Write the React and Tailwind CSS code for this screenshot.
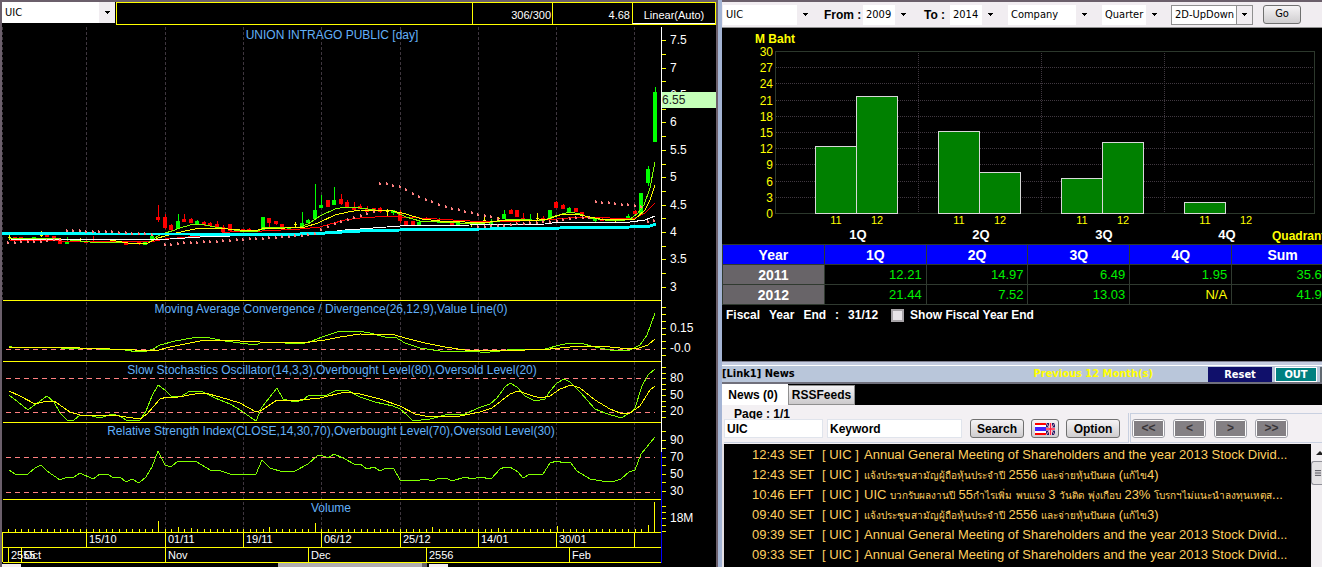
import { useState } from "react";
import { Menu } from "lucide-react";

const GRID_X = [86, 165, 243, 321, 400, 478, 556, 634];
const barX = (i) => 8 + Math.round(i * 6.53);

// x, high, open/close top, open/close bottom, low, type
const CANDLES = [
  [9, 235, 237, 238, 240, "y"],
  [15, 237, 237, 239, 239, "r"],
  [21, 237, 237, 239, 239, "r"],
  [34, 237, 237, 240, 240, "g"],
  [41, 231, 235, 236, 237, "y"],
  [47, 235, 235, 237, 237, "r"],
  [54, 236, 236, 239, 239, "r"],
  [60, 239, 239, 244, 244, "r"],
  [67, 237, 242, 244, 244, "g"],
  [80, 238, 239, 240, 241, "y"],
  [86, 240, 241, 243, 243, "r"],
  [93, 236, 241, 243, 243, "r"],
  [113, 240, 241, 243, 243, "r"],
  [126, 241, 242, 245, 245, "r"],
  [139, 241, 242, 244, 245, "r"],
  [145, 241, 242, 245, 245, "g"],
  [152, 236, 236, 240, 240, "g"],
  [158, 205, 217, 220, 222, "r"],
  [165, 214, 217, 228, 229, "r"],
  [171, 224, 225, 230, 231, "r"],
  [178, 214, 221, 229, 229, "g"],
  [184, 214, 219, 222, 222, "r"],
  [191, 218, 219, 223, 223, "r"],
  [197, 220, 221, 225, 225, "g"],
  [204, 221, 222, 225, 226, "r"],
  [210, 222, 223, 226, 227, "r"],
  [217, 221, 224, 228, 228, "r"],
  [223, 225, 227, 232, 232, "r"],
  [230, 224, 224, 231, 232, "r"],
  [237, 230, 230, 232, 232, "g"],
  [243, 229, 229, 231, 231, "r"],
  [249, 228, 229, 231, 231, "r"],
  [256, 230, 230, 232, 232, "g"],
  [263, 217, 217, 230, 231, "g"],
  [269, 218, 218, 223, 227, "r"],
  [276, 221, 221, 224, 225, "r"],
  [282, 224, 224, 228, 229, "r"],
  [289, 227, 228, 230, 230, "g"],
  [295, 222, 224, 225, 228, "y"],
  [302, 212, 223, 227, 227, "g"],
  [308, 219, 220, 223, 224, "g"],
  [315, 184, 210, 219, 220, "g"],
  [321, 195, 205, 208, 208, "g"],
  [328, 200, 200, 207, 207, "r"],
  [334, 187, 200, 205, 205, "g"],
  [341, 194, 199, 204, 205, "r"],
  [347, 200, 202, 208, 208, "r"],
  [354, 202, 207, 210, 210, "r"],
  [360, 204, 206, 209, 209, "r"],
  [367, 206, 209, 212, 212, "r"],
  [374, 208, 208, 211, 211, "r"],
  [380, 207, 208, 212, 213, "r"],
  [387, 209, 211, 212, 216, "y"],
  [393, 210, 210, 213, 215, "g"],
  [400, 210, 213, 221, 223, "r"],
  [406, 221, 221, 225, 225, "r"],
  [413, 221, 221, 225, 225, "r"],
  [419, 221, 222, 225, 225, "g"],
  [426, 217, 218, 220, 220, "r"],
  [439, 218, 221, 223, 223, "g"],
  [452, 221, 222, 225, 225, "r"],
  [458, 221, 222, 225, 225, "g"],
  [471, 222, 223, 224, 227, "y"],
  [476, 221, 221, 225, 225, "g"],
  [484, 215, 220, 221, 222, "y"],
  [491, 219, 222, 225, 226, "g"],
  [498, 217, 218, 219, 221, "y"],
  [504, 210, 214, 219, 219, "g"],
  [511, 209, 210, 214, 214, "r"],
  [517, 210, 210, 217, 217, "r"],
  [523, 213, 218, 220, 220, "r"],
  [530, 214, 219, 221, 221, "g"],
  [537, 213, 218, 219, 220, "y"],
  [543, 216, 218, 221, 221, "r"],
  [550, 210, 210, 219, 219, "g"],
  [556, 201, 202, 208, 208, "r"],
  [563, 204, 205, 209, 209, "r"],
  [569, 207, 208, 212, 212, "g"],
  [576, 208, 208, 212, 212, "r"],
  [582, 212, 212, 215, 215, "r"],
  [595, 217, 219, 221, 222, "g"],
  [602, 218, 219, 221, 221, "r"],
  [615, 219, 220, 221, 222, "y"],
  [628, 214, 216, 218, 219, "g"],
  [635, 210, 211, 214, 214, "r"],
  [641, 193, 193, 214, 214, "g"],
  [648, 166, 169, 183, 186, "g"],
  [655, 87, 92, 142, 142, "g"],
];

const CANDLE_FILL = { r: "#ff0000", g: "#00ff00", y: "#ffff00" };

// first bar index, then one y per bar
const SAR_RUNS = [
  [0, [242, 242, 241, 241, 241, 241, 240, 239, 239]],
  [9, [230, 230, 230, 231, 231, 231, 231, 231, 232, 232, 233, 233, 233, 234]],
  [24, [244, 244, 243, 242, 242, 242, 241, 241, 241, 240, 240, 239, 239, 238, 238, 238, 237, 237, 236, 236, 235, 235, 234, 233, 229, 226, 223, 221, 219, 217, 215, 213, 211]],
  [57, [183, 183, 185, 186, 189, 193, 196, 199, 201, 204, 206, 208, 209, 211, 212, 214, 215, 216, 218]],
  [72, [226, 226, 225, 225, 225, 224, 223, 223, 222, 222, 221, 221, 220, 219, 218, 217, 217, 217]],
  [90, [201, 202, 202, 203, 204, 204, 205, 206]],
  [98, [221, 220]],
];

const PRICE_LINES = [
  { color: "#ff0000", points: "9,240 60,241 150,242 165,239 200,236 230,232 262,231 300,229 320,227 330,224 345,220 360,218 375,217 390,216 400,217 420,218 470,221 520,221 545,220 580,217 610,218 635,218 645,213 655,203" },
  { color: "#80ff00", points: "9,239 40,238 60,239 90,242 120,242 135,244 148,243 158,236 165,233 172,231 180,228 190,225 198,224 205,225 215,227 228,229 240,231 258,231 264,227 280,227 300,227 308,224 320,216 335,209 345,207 360,208 375,210 393,211 406,217 420,221 440,222 460,223 485,223 500,221 510,219 530,220 545,220 555,216 570,212 580,214 590,218 605,220 620,221 630,219 637,214 644,205 650,188 655,162" },
  { color: "#ffff00", points: "9,236 12,239 40,240 60,239 110,240 128,243 148,243 158,238 172,234 185,231 200,228 215,228 228,229 240,230 258,230 266,228 285,228 305,227 318,223 335,215 348,212 360,210 393,211 406,214 422,219 440,221 465,222 490,222 505,220 530,221 548,219 560,215 575,214 585,216 600,219 620,220 635,219 645,210 650,200 655,185" },
  { color: "#ffffff", points: "9,239 130,240 170,239 200,237 230,236 270,235 320,233 345,230 360,229 400,226 470,225 545,224 560,222 630,222 645,220 655,216" },
];

const MACD_FAST = "9,346 15,348 40,347 50,347 60,348 100,349 125,350 138,352 147,351 153,349 160,345 175,341 192,338 205,337 225,341 240,343 256,345 262,342 285,343 305,343 312,341 322,337 340,331 358,331 370,333 385,337 395,337 405,343 420,348 440,351 460,351 480,352 490,352 500,351 515,349 545,349 560,345 570,343 580,343 595,347 610,350 630,350 640,345 647,335 655,313";
const MACD_SLOW = "9,348 20,347 65,347 80,348 110,349 135,350 155,351 170,347 185,344 200,341 215,340 240,341 260,342 285,342 310,342 325,340 340,337 360,334 395,335 405,338 425,343 445,347 465,350 500,351 550,349 580,346 600,346 620,348 636,349 648,345 655,339";
const STOCH_FAST = "9,395 18,402 28,410 36,404 47,396 54,402 60,413 67,420 74,420 80,415 88,415 100,418 112,414 120,416 126,420 140,420 146,411 152,396 158,385 165,390 171,396 180,397 190,391 203,392 215,398 230,404 237,408 256,421 262,407 277,388 283,399 295,402 303,400 309,395 315,396 327,395 335,391 347,390 354,394 360,397 375,402 393,406 400,409 407,415 413,421 430,419 445,415 465,414 478,408 490,404 497,398 505,387 510,383 517,387 525,396 535,401 545,399 550,391 557,383 564,379 570,382 580,392 595,409 605,413 621,418 630,413 635,408 642,386 648,375 655,369";
const STOCH_SLOW = "9,391 20,396 35,404 47,401 54,401 70,412 80,415 100,416 112,415 140,419 147,414 160,399 167,397 178,397 195,394 205,393 220,397 240,403 256,412 262,410 277,400 300,400 320,398 345,392 360,394 380,399 400,406 415,414 430,417 460,416 480,412 492,408 510,394 518,391 530,395 540,398 550,396 560,389 571,385 580,388 595,400 610,409 620,413 630,413 640,406 650,390 655,386";
const RSI = "9,470 15,474 28,474 35,468 41,465 47,471 60,480 67,477 74,477 80,473 93,479 100,474 108,474 112,477 120,477 126,482 132,479 139,483 146,477 152,467 158,451 165,465 171,467 178,461 197,462 210,470 218,470 230,474 256,474 262,460 270,468 283,472 295,471 308,464 317,456 321,455 328,458 334,454 345,459 354,464 360,464 367,469 374,467 380,471 386,468 394,469 400,480 415,481 426,479 432,481 440,478 446,478 452,481 465,477 472,479 480,477 491,479 500,469 505,467 510,467 518,472 523,478 530,474 543,474 550,463 557,461 564,463 570,462 577,471 590,479 602,481 615,481 621,479 629,472 635,470 641,454 655,437";

const AXIS_LABELS = [
  ["7.5", 40], ["7", 68], ["6.5", 95], ["6", 122], ["5.5", 150], ["5", 177],
  ["4.5", 205], ["4", 232], ["3.5", 259], ["3", 287],
  ["0.15", 328], ["-0.0", 348],
  ["80", 378], ["50", 395], ["20", 411],
  ["90", 440], ["70", 457], ["50", 474], ["30", 491],
  ["18M", 518],
];

const AXIS_TICKS = [
  40, 54, 68, 81, 95, 109, 122, 136, 150, 164, 177, 191, 205, 218, 232, 246, 259, 273, 287,
  307, 314, 321, 328, 334, 341, 348, 355,
  367, 373, 378, 384, 389, 395, 401, 406, 411, 417,
  431, 440, 448, 457, 465, 474, 482, 491,
  506, 512, 518, 525, 531,
];

const PANEL_TITLES = [
  ["UNION INTRAGO PUBLIC [day]", 332, 39],
  ["Moving Average Convergence / Divergence(26,12,9),Value Line(0)", 331, 313],
  ["Slow Stochastics Oscillator(14,3,3),Overbought Level(80),Oversold Level(20)", 332, 374],
  ["Relative Strength Index(CLOSE,14,30,70),Overbought Level(70),Oversold Level(30)", 331, 435],
  ["Volume", 331, 512],
];

const DAYS = [["15/10", 89], ["01/11", 168], ["19/11", 246], ["06/12", 324], ["25/12", 403], ["14/01", 481], ["30/01", 559]];
const MONTHS = [["2555", 11], ["Oct", 24], ["Nov", 168], ["Dec", 311], ["2556", 429], ["Feb", 572]];
const VOLUME = { 23: 11, 26: 5, 28: 4, 47: 9, 65: 5, 75: 4, 84: 6, 98: 7, 99: 30, 40: 5 };

const Line = ({ points, color, width = 1 }) => (
  <polyline points={points} fill="none" stroke={color} strokeWidth={width} shapeRendering="crispEdges" />
);

const StockChart = () => (
  <svg viewBox="2 26 714 541" className="block w-full font-['Liberation_Sans',sans-serif] text-[12px]">
    <g shapeRendering="crispEdges">
      {GRID_X.map((x) => (
        <line key={x} x1={x + 0.5} x2={x + 0.5} y1="27" y2="532" stroke="#3e363e" strokeDasharray="3 2" />
      ))}
      <line x1="2.5" x2="2.5" y1="27" y2="300" stroke="#3e363e" strokeDasharray="3 2" />

      {/* Panel separators and the two calendar rows */}
      {[300, 361, 422, 499, 532, 547, 562].map((y) => (
        <line key={y} x1="3" x2="661" y1={y + 0.5} y2={y + 0.5} stroke="#ffff00" />
      ))}
      {GRID_X.map((x) => (
        <line key={x} x1={x + 0.5} x2={x + 0.5} y1="532" y2="547" stroke="#ffff00" />
      ))}
      {[8, 21, 165, 308, 426, 569].map((x) => (
        <line key={x} x1={x + 0.5} x2={x + 0.5} y1="547" y2="562" stroke="#ffff00" />
      ))}
      <line x1="2.5" x2="2.5" y1="532" y2="562" stroke="#ffff00" />

      {[349, 378, 412, 457, 492].map((y) => (
        <line key={y} x1="6" x2="655" y1={y + 0.5} y2={y + 0.5} stroke="#ff8080" strokeDasharray="5 4" />
      ))}

      {CANDLES.map(([x, high, top, bottom, low, type]) => (
        <g key={x} fill={CANDLE_FILL[type]}>
          <rect x={x} y={high} width="1" height={low - high} />
          <rect x={x - 1} y={top} width="3" height={bottom - top} />
          {type !== "y" && <rect x={x - 2} y={top} width="4" height={bottom - top} />}
        </g>
      ))}
    </g>

    {PRICE_LINES.map((l) => (
      <Line key={l.color} {...l} />
    ))}
    <Line color="#00ffff" width={3} points="2,233 12,233 96,234 190,234 300,234 325,233 360,231 400,230 480,229 490,229 560,228 630,227 650,226 656,224" />

    <g fill="#ff8080" shapeRendering="crispEdges">
      {SAR_RUNS.map(([start, ys]) =>
        ys.map((y, i) => (
          <path key={`${start}-${i}`} d={`M${barX(start + i) - 1} ${y - 1}h1v1h1v2h-2z`} />
        ))
      )}
    </g>

    <Line color="#80ff00" points={MACD_FAST} />
    <Line color="#ffff00" points={MACD_SLOW} />
    <Line color="#80ff00" points={STOCH_FAST} />
    <Line color="#ffff00" points={STOCH_SLOW} />
    <Line color="#80ff00" points={RSI} />

    <g fill="#ffff00" shapeRendering="crispEdges">
      {Array.from({ length: 100 }, (_, i) => {
        const h = VOLUME[i] || 3;
        return <rect key={i} x={barX(i)} y={532 - h} width="1" height={h} />;
      })}
      {AXIS_TICKS.map((y) => (
        <rect key={y} x="662" y={y} width="4" height="1" />
      ))}
    </g>
    <rect x="661" y="27" width="1" height="425" fill="#ffffff" />
    <rect x="661" y="452" width="1" height="111" fill="#0000ff" />

    {AXIS_LABELS.map(([label, y]) => (
      <text key={y} x="670" y={y + 4} fill="#ffffff">
        {label}
      </text>
    ))}
    <rect x="662" y="92" width="54" height="16" fill="#c4ffb8" />
    <text x="662" y="104" fill="#202020">
      6.55
    </text>

    {PANEL_TITLES.map(([title, x, y]) => (
      <text key={title} x={x} y={y} textAnchor="middle" fill="#62b0f8">
        {title}
      </text>
    ))}
    <g fill="#ffffff" className="text-[11px]">
      {DAYS.map(([label, x]) => (
        <text key={label} x={x} y="543">
          {label}
        </text>
      ))}
      {MONTHS.map(([label, x]) => (
        <text key={label} x={x} y="559">
          {label}
        </text>
      ))}
    </g>

    {/* Horizontal scroll bar */}
    <g shapeRendering="crispEdges">
      <rect x="2" y="564" width="19" height="3" fill="#f4eef2" />
      <rect x="278" y="563" width="146" height="4" fill="#b0acb0" />
      <rect x="422" y="563" width="5" height="4" fill="#6a646a" />
      <rect x="429" y="564" width="19" height="3" fill="#f4eef2" />
    </g>
  </svg>
);

const QUARTERS = [
  { name: "1Q", y11: 12.21, y12: 21.44 },
  { name: "2Q", y11: 14.97, y12: 7.52 },
  { name: "3Q", y11: 6.49, y12: 13.03 },
  { name: "4Q", y11: 1.95, y12: null },
];

const QuarterChart = () => {
  const scale = (v) => Math.round(213 - v * 5.46);
  return (
    <svg viewBox="722 28 600 216" className="block w-full font-['Liberation_Sans',sans-serif] text-[12px]">
      <text x="755" y="43" fill="#ffff00" fontWeight="bold">
        M Baht
      </text>
      <g shapeRendering="crispEdges" stroke="#403840" fill="none">
        {Array.from({ length: 11 }, (_, i) => (
          <line key={i} x1="776" x2="1315" y1={Math.round(51 + i * 16.2) + 0.5} y2={Math.round(51 + i * 16.2) + 0.5} strokeDasharray="1 1" />
        ))}
        {[918, 1041, 1164].map((x) => (
          <line key={x} x1={x + 0.5} x2={x + 0.5} y1="51" y2="213" strokeDasharray="1 1" />
        ))}
        <rect x="775.5" y="51.5" width="539" height="162" stroke="#2c382c" />
      </g>
      {Array.from({ length: 11 }, (_, i) => (
        <text key={i} x="773" y={Math.round(51 + i * 16.2) + 5} textAnchor="end" fill="#ffff00">
          {30 - i * 3}
        </text>
      ))}
      {QUARTERS.map((q, i) => {
        const x = 815 + i * 123;
        return (
          <g key={q.name}>
            <g fill="#008000" stroke="#d8d8d8" shapeRendering="crispEdges">
              <rect x={x + 0.5} y={scale(q.y11) + 0.5} width="41" height={213 - scale(q.y11)} />
              {q.y12 !== null && (
                <rect x={x + 41.5} y={scale(q.y12) + 0.5} width="41" height={213 - scale(q.y12)} />
              )}
            </g>
            <g textAnchor="middle">
              <text x={x + 21} y="224" fill="#ffff00" className="text-[11px]">
                11
              </text>
              <text x={x + 62} y="224" fill="#ffff00" className="text-[11px]">
                12
              </text>
              <text x={x + 43} y="239" fill="#ffffff" className="text-[13px]" fontWeight="bold">
                {q.name}
              </text>
            </g>
          </g>
        );
      })}
      <text x="1272" y="240" fill="#ffff00" fontWeight="bold">
        Quadrant
      </text>
    </svg>
  );
};

const Combo = ({ label, value, className, arrowClass = "bg-[#f1edf1]" }) => (
  <span className={`relative flex h-5 items-center overflow-hidden bg-white ${className}`}>
    <select
      aria-label={label}
      className="h-full w-full appearance-none bg-transparent pt-px pl-[3px] font-['DejaVu_Sans_Condensed',sans-serif] text-[11px] text-black outline-none"
    >
      <option>{value}</option>
    </select>
    <span className={`pointer-events-none absolute inset-y-0 right-0 flex w-4 items-center justify-center ${arrowClass}`}>
      <svg viewBox="0 0 5 3" className="h-[3px] w-[5px]" shapeRendering="crispEdges">
        <path d="M0 0h5v1h-1v1h-1v1h-1v-1h-1v-1h-1z" />
      </svg>
    </span>
  </span>
);

const TABLE_ROWS = [
  { year: "2011", cells: ["12.21", "14.97", "6.49", "1.95", "35.62"] },
  { year: "2012", cells: ["21.44", "7.52", "13.03", "N/A", "41.99"] },
];

const QuarterTable = () => (
  <table className="w-[102%] table-fixed border-collapse text-[14px] leading-4">
    <thead>
      <tr className="h-5 bg-[#0000ff]">
        {["Year", "1Q", "2Q", "3Q", "4Q", "Sum"].map((h) => (
          <th key={h} className="border border-[#303a30] p-0 font-bold">
            {h}
          </th>
        ))}
      </tr>
    </thead>
    <tbody>
      {TABLE_ROWS.map((row) => (
        <tr key={row.year} className="h-5">
          <th className="border border-[#303a30] bg-[#686468] p-0 font-bold">{row.year}</th>
          {row.cells.map((c, i) => (
            <td
              key={i}
              className={`border border-[#303a30] py-0 pr-1 pl-0 text-right text-[13px] ${
                c === "N/A" ? "text-[#ffff00]" : "text-[#00f000]"
              }`}
            >
              {c}
            </td>
          ))}
        </tr>
      ))}
    </tbody>
  </table>
);

const ANNUAL = "Annual General Meeting of Shareholders and the year 2013 Stock Divid...";
const NEWS = [
  ["12:43", "SET", ANNUAL],
  ["12:43", "SET", "แจ้งประชุมสามัญผู้ถือหุ้นประจำปี 2556 และจ่ายหุ้นปันผล (แก้ไข4)"],
  ["10:46", "EFT", "UIC บวกรับผลงานปี 55กำไรเพิ่ม พบแรง 3 วันติด พุ่งเกือบ 23% โบรกฯไม่แนะนำลงทุนเหตุส..."],
  ["09:40", "SET", "แจ้งประชุมสามัญผู้ถือหุ้นประจำปี 2556 และจ่ายหุ้นปันผล (แก้ไข3)"],
  ["09:39", "SET", ANNUAL],
  ["09:33", "SET", ANNUAL],
];

// Thai runs are set smaller than the Latin text and digits around them
const Headline = ({ text }) =>
  text.split(/([\u0E00-\u0E7F]+)/).map((part, i) =>
    i % 2 ? (
      <span key={i} className="text-[10px]">
        {part}
      </span>
    ) : (
      part
    )
  );

const FlagIcon = () => (
  <svg viewBox="0 0 20 12" className="h-3 w-5">
    <rect width="20" height="12" fill="#ffffff" />
    <rect width="11" height="2" fill="#ff0000" />
    <rect y="10" width="11" height="2" fill="#ff0000" />
    <rect y="4" width="11" height="4" fill="#4020ff" />
    <rect x="11" width="9" height="12" fill="#20206a" />
    <path d="M11 0l9 12M20 0l-9 12" stroke="#f0b0c0" strokeWidth="1" />
    <path d="M15.5 0v12M11 6h9" stroke="#ffffff" strokeWidth="3" />
    <path d="M15.5 0v12M11 6h9" stroke="#ff2040" strokeWidth="1.6" />
  </svg>
);

const BUTTON =
  "flex h-[19px] shrink-0 items-center justify-center rounded-[3px] border border-[#707070] bg-linear-to-b from-[#f6f4f6] to-[#cfcdcf] text-black";

const NewsPanel = () => {
  const [symbol, setSymbol] = useState("UIC");
  const [keyword, setKeyword] = useState("Keyword");

  return (
    <div className="flex flex-1 flex-col text-[12px] font-bold">
      {/* Title bar */}
      <div className="h-1 border-t border-[#808090] bg-[#c4cce0]" />
      <div className="flex h-[19px] items-center gap-[3px] overflow-hidden border-t border-b-2 border-t-white border-b-[#70707c] bg-[#b9c6da] font-['DejaVu_Sans_Condensed',sans-serif] text-[11px] whitespace-nowrap text-black">
        <h2>[Link1] News</h2>
        <span className="flex-1 pr-[52px] text-right text-[#ffff00]">Previous 12 Month(s)</span>
        <button className="h-[15px] w-16 shrink-0 bg-[#10106b] leading-[15px] text-white">Reset</button>
        <button className="h-[15px] w-[42px] shrink-0 border border-white bg-[#008080] leading-[13px] text-white">OUT</button>
        <span className="h-[15px] w-0.5 bg-[#606870]" />
      </div>

      {/* Tabs */}
      <div className="flex h-[21px] items-end text-black">
        <button className="h-full w-[66px] bg-white pr-1">News (0)</button>
        <button className="h-5 w-[67px] border border-[#909090] bg-linear-to-b from-[#f4f2f4] to-[#cccacc]">RSSFeeds</button>
      </div>

      {/* Search bar */}
      <div className="flex h-[39px] bg-[#f3f0f3] pl-0.5 text-black">
        <fieldset className="mt-[2px] flex h-9 min-w-0 items-start border-r border-b border-[#c8d0e0] pr-2">
          <legend className="ml-[10px] h-3 overflow-hidden leading-[14px]">Page : 1/1</legend>
          <div className="flex gap-1">
            <input
              aria-label="Symbol"
              value={symbol}
              onChange={(e) => setSymbol(e.target.value)}
              className="h-[19px] w-[99px] border border-[#e0e4ec] bg-white pl-[2px] outline-none"
            />
            <input
              aria-label="Keyword"
              value={keyword}
              onChange={(e) => setKeyword(e.target.value)}
              className="h-[19px] w-[135px] border border-[#e0e4ec] bg-white pl-[2px] outline-none"
            />
            <div className="flex gap-[7px] pl-1">
              <button className={`${BUTTON} w-[54px]`}>Search</button>
              <button className={`${BUTTON} w-7`} aria-label="Language">
                <FlagIcon />
              </button>
              <button className={`${BUTTON} w-[54px]`}>Option</button>
            </div>
          </div>
        </fieldset>
        <div className="mt-2 ml-px flex h-[30px] flex-1 gap-2 border-t border-b border-l border-[#c8d0e0] pt-[5px] pl-px">
          {["<<", "<", ">", ">>"].map((s) => (
            <button key={s} className="h-[19px] w-[33px] shrink-0 rounded-[3px] border border-[#a0a0a8] bg-white p-px text-[#383438]">
              <span className="block h-[15px] bg-[#848084] leading-[15px]">{s}</span>
            </button>
          ))}
        </div>
      </div>

      {/* Headlines */}
      <div className="flex flex-1 border-l-2 border-[#e4e0e4] font-normal">
        <ul className="min-w-0 flex-1 pt-px pl-7 text-[13px] text-[#ffd060]">
          {NEWS.map(([time, source, title], i) => (
            <li key={i} className="flex h-5 items-center overflow-hidden whitespace-nowrap">
              <span className="w-[37px] shrink-0">{time}</span>
              <span className="w-[33px] shrink-0">{source}</span>
              <span className="w-[42px] shrink-0">[ UIC ]</span>
              <a href="#news">
                <Headline text={title} />
              </a>
            </li>
          ))}
        </ul>
        <div className="flex w-[11px] flex-col overflow-hidden bg-[#f1eef1]">
          <svg viewBox="0 0 11 17" className="h-[17px] w-[11px]">
            <path d="M5 11l4-4 4 4z" fill="#202020" />
          </svg>
          <div className="flex h-6 items-center rounded-l-[3px] border border-r-0 border-[#909098] bg-[#e4e2e4] pl-[2px] text-[#505058]">
            <Menu size={10} strokeWidth={3} />
          </div>
        </div>
      </div>
    </div>
  );
};

export default function App() {
  return (
    <main className="grid min-h-screen grid-cols-[718fr_4px_600fr] overflow-hidden bg-black font-['Liberation_Sans','Noto_Sans',sans-serif]">
      {/* Price chart */}
      <section className="min-w-0 border-x-2 border-t-2 border-[#6b5f6b]">
        <div className="flex h-6 items-start text-[11px] text-white">
          <Combo label="Stock" value="UIC" className="h-[21px] w-[113px]" />
          <div className="ml-px flex h-[23px] flex-1 border border-[#ffff00] leading-[25px]">
            <div className="flex-1" />
            <div className="w-20 border-l border-[#ffff00] pr-px text-right">306/300</div>
            <div className="w-20 border-l border-[#ffff00] pr-[2px] text-right">4.68</div>
            <button className="w-[83px] border-b border-l border-b-white border-l-[#ffff00]">Linear(Auto)</button>
          </div>
        </div>
        <StockChart />
      </section>

      <div className="bg-[#a4b4d4]" />

      <section className="flex min-w-0 flex-col overflow-hidden text-white">
        <form
          className="flex h-7 items-center border-t-2 border-b border-t-[#6b5f6b] border-b-[#909090] bg-[#f1edf1] pl-px text-[12px] whitespace-nowrap text-black"
          onSubmit={(e) => e.preventDefault()}
        >
          <Combo label="Symbol" value="UIC" className="w-[90px]" />
          <b className="ml-[11px] w-[39px]">From :</b>
          <Combo label="From" value="2009" className="w-12" />
          <b className="ml-[13px] w-6">To :</b>
          <Combo label="To" value="2014" className="ml-[2px] w-12" />
          <Combo label="Scope" value="Company" className="ml-[10px] w-[84px]" />
          <Combo label="Period" value="Quarter" className="ml-[10px] w-[60px]" />
          <Combo label="Chart type" value="2D-UpDown" className="ml-[9px] w-[82px] border border-[#909090]" arrowClass="border-l border-[#909090] bg-[#f1edf1]" />
          <button className={`${BUTTON} ml-[10px] w-[38px] font-['DejaVu_Sans_Condensed',sans-serif] text-[11px]`}>Go</button>
        </form>

        <QuarterChart />
        <QuarterTable />

        <div className="flex h-14 items-start pt-[2px] pl-1 text-[12px] leading-4 font-bold whitespace-nowrap">
          <div className="flex gap-[9px]">
            <span>Fiscal</span>
            <span>Year</span>
            <span>End</span>
            <span>:</span>
            <span>31/12</span>
          </div>
          <label className="ml-[13px] flex items-center gap-[6px]">
            <input type="checkbox" className="size-[13px] appearance-none border-2 border-[#a8a4a8] bg-[#e8e4e8]" />
            Show Fiscal Year End
          </label>
        </div>

        <NewsPanel />
      </section>
    </main>
  );
}
